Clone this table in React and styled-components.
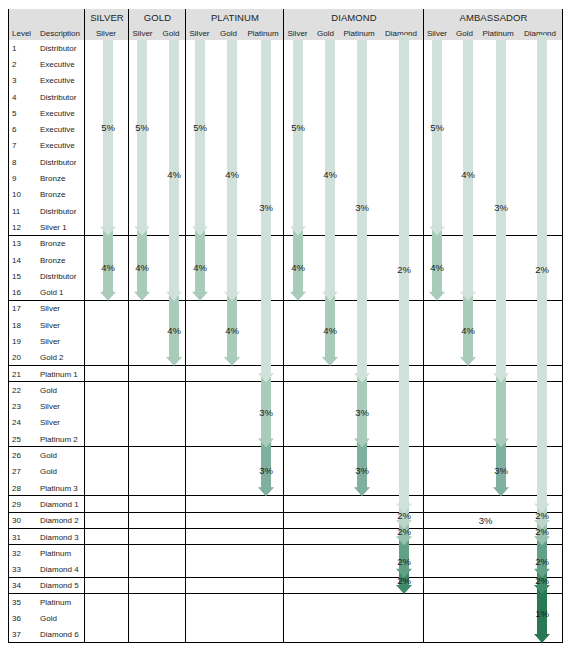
import React from 'react';
import styled, { createGlobalStyle } from 'styled-components';

const GlobalStyle = createGlobalStyle`
  html, body { margin: 0; padding: 0; background: #ffffff; }
  body { font-family: "Liberation Sans", Arial, sans-serif; color: #1c1c1c; }
`;

const Page = styled.div`
  padding: 9px 0 0 8px;
`;

const Grid = styled.div`
  display: grid;
  width: 554px;
  grid-template-columns: 27px 49px 44px 29px 28px 29px 29px 40px 29px 27px 40px 44px 28px 27px 40px 44px;
  grid-template-rows: 17px 14px repeat(37, 16.3px);
  border-left: 1px solid #000;
`;

const HeaderShade = styled.div`
  grid-column: 1 / -1;
  grid-row: 1 / 3;
  background: #dfdfdf;
  z-index: 0;
`;

const Frame = styled.div`
  grid-column: ${(p) => p.$cols};
  grid-row: 1 / -1;
  border-right: 1px solid #000;
  z-index: 1;
`;

const Band = styled.div`
  grid-column: 1 / -1;
  grid-row: ${(p) => p.$from + 2} / ${(p) => p.$to + 3};
  border-bottom: 1px solid #000;
  z-index: 1;
`;

const GroupTitle = styled.div`
  grid-column: ${(p) => p.$cols};
  grid-row: 1;
  display: flex;
  align-items: center;
  justify-content: center;
  font-size: 9.5px;
  letter-spacing: 0.1px;
  z-index: 2;
`;

const SubHead = styled.div`
  grid-column: ${(p) => p.$col};
  grid-row: 2;
  display: flex;
  align-items: center;
  justify-content: center;
  padding-right: 2px;
  font-size: 8px;
  white-space: nowrap;
  z-index: 2;
`;

const InfoHead = styled.div`
  grid-column: ${(p) => p.$col};
  grid-row: 2;
  display: flex;
  align-items: center;
  padding-left: ${(p) => p.$pad}px;
  font-size: 8px;
  z-index: 2;
`;

const Cell = styled.div`
  grid-column: ${(p) => p.$col};
  grid-row: ${(p) => p.$row + 2};
  display: flex;
  align-items: center;
  padding-left: ${(p) => p.$pad}px;
  font-size: 8px;
  white-space: nowrap;
  z-index: 2;
`;

const Segment = styled.div`
  grid-column: ${(p) => p.$col};
  grid-row: ${(p) => p.$from + 2} / ${(p) => p.$to + 3};
  justify-self: start;
  width: 16px;
  margin-left: ${(p) => p.$ml}px;
  margin-top: ${(p) => p.$mt}px;
  background: ${(p) => p.$color};
  clip-path: polygon(3px 0, 13px 0, 13px calc(100% - 9px), 16px calc(100% - 9px), 8px 100%, 0 calc(100% - 9px), 3px calc(100% - 9px));
  z-index: ${(p) => p.$z};
`;

const Pct = styled.div`
  grid-column: ${(p) => p.$col};
  grid-row: ${(p) => p.$from + 2} / ${(p) => p.$to + 3};
  justify-self: start;
  align-self: center;
  width: 16px;
  margin-left: ${(p) => p.$ml}px;
  display: flex;
  justify-content: center;
  font-size: 9.5px;
  line-height: 10px;
  white-space: nowrap;
  transform: translateY(${(p) => p.$dy}px);
  z-index: 30;
`;

const FreeNote = styled.div`
  grid-column: 14 / 16;
  grid-row: ${30 + 2};
  display: flex;
  align-items: center;
  justify-content: center;
  font-size: 9.5px;
  z-index: 30;
`;

const LIGHT = '#d0e0da';
const MED = '#a8cbba';
const DARK = '#7fb09f';
const D1 = '#bcd6ca';
const D2 = '#97c1ae';
const D3 = '#62a088';
const D4 = '#3f8a69';
const D5 = '#2a7853';

const silverLane = {
  segs: [
    { from: 1, to: 12, c: LIGHT },
    { from: 13, to: 16, c: MED },
  ],
  labels: [
    { t: '5%', from: 6, to: 6, dy: -2 },
    { t: '4%', from: 14, to: 15, dy: 0 },
  ],
};

const goldLane = {
  segs: [
    { from: 1, to: 16, c: LIGHT },
    { from: 17, to: 20, c: MED },
  ],
  labels: [
    { t: '4%', from: 9, to: 9, dy: -4 },
    { t: '4%', from: 18, to: 19, dy: -2 },
  ],
};

const platSegs = [
  { from: 1, to: 21, c: LIGHT },
  { from: 22, to: 25, c: MED },
  { from: 26, to: 28, c: DARK },
];

const platLane = {
  segs: platSegs,
  labels: [
    { t: '3%', from: 11, to: 11, dy: -3 },
    { t: '3%', from: 23, to: 24, dy: -2 },
    { t: '3%', from: 27, to: 27, dy: -1 },
  ],
};

const platLaneAmb = {
  segs: platSegs,
  labels: [
    { t: '3%', from: 11, to: 11, dy: -3 },
    { t: '3%', from: 27, to: 27, dy: -1 },
  ],
};

const diamondSegs = [
  { from: 1, to: 29, c: LIGHT, top: -5 },
  { from: 30, to: 30, c: D1 },
  { from: 31, to: 31, c: D2 },
  { from: 32, to: 33, c: D3 },
  { from: 34, to: 34, c: D4 },
];

const diamondLabels = [
  { t: '2%', from: 14, to: 15, dy: 2 },
  { t: '2%', from: 30, to: 30, dy: -5 },
  { t: '2%', from: 31, to: 31, dy: -5 },
  { t: '2%', from: 32, to: 33, dy: 0 },
  { t: '2%', from: 34, to: 34, dy: -5 },
];

const diamondLane = { segs: diamondSegs, labels: diamondLabels };

const diamondLaneAmb = {
  segs: [...diamondSegs, { from: 35, to: 37, c: D5 }],
  labels: [...diamondLabels, { t: '1%', from: 35, to: 37, dy: -5 }],
};

const lanes = [
  { col: 3, ml: 15, ...silverLane },
  { col: 4, ml: 5, ...silverLane },
  { col: 5, ml: 8, ...goldLane },
  { col: 6, ml: 6, ...silverLane },
  { col: 7, ml: 9, ...goldLane },
  { col: 8, ml: 14, ...platLane },
  { col: 9, ml: 6, ...silverLane },
  { col: 10, ml: 9, ...goldLane },
  { col: 11, ml: 14, ...platLane },
  { col: 12, ml: 16, ...diamondLane },
  { col: 13, ml: 5, ...silverLane },
  { col: 14, ml: 8, ...goldLane },
  { col: 15, ml: 14, ...platLaneAmb },
  { col: 16, ml: 15, ...diamondLaneAmb },
];

const groups = [
  { name: 'SILVER', cols: '3 / 4' },
  { name: 'GOLD', cols: '4 / 6' },
  { name: 'PLATINUM', cols: '6 / 9' },
  { name: 'DIAMOND', cols: '9 / 13' },
  { name: 'AMBASSADOR', cols: '13 / 17' },
];

const frames = ['1 / 3', '3 / 4', '4 / 6', '6 / 9', '9 / 13', '13 / 17'];

const subHeads = [
  'Silver',
  'Silver', 'Gold',
  'Silver', 'Gold', 'Platinum',
  'Silver', 'Gold', 'Platinum', 'Diamond',
  'Silver', 'Gold', 'Platinum', 'Diamond',
];

const descriptions = [
  'Distributor', 'Executive', 'Executive', 'Distributor', 'Executive', 'Executive',
  'Executive', 'Distributor', 'Bronze', 'Bronze', 'Distributor', 'Silver 1',
  'Bronze', 'Bronze', 'Distributor', 'Gold 1', 'Silver', 'Silver', 'Silver',
  'Gold 2', 'Platinum 1', 'Gold', 'Silver', 'Silver', 'Platinum 2', 'Gold',
  'Gold', 'Platinum 3', 'Diamond 1', 'Diamond 2', 'Diamond 3', 'Platinum',
  'Diamond 4', 'Diamond 5', 'Platinum', 'Gold', 'Diamond 6',
];

const groupEnds = [12, 16, 20, 21, 25, 28, 29, 30, 31, 33, 34, 37];

export default function App() {
  const bands = groupEnds.map((end, i) => ({ from: i === 0 ? 1 : groupEnds[i - 1] + 1, to: end }));
  return (
    <Page>
      <GlobalStyle />
      <Grid>
        <HeaderShade />
        {frames.map((c) => (
          <Frame key={c} $cols={c} />
        ))}
        {bands.map((b) => (
          <Band key={b.to} $from={b.from} $to={b.to} />
        ))}
        {groups.map((g) => (
          <GroupTitle key={g.name} $cols={g.cols}>
            {g.name}
          </GroupTitle>
        ))}
        <InfoHead $col={1} $pad={3}>Level</InfoHead>
        <InfoHead $col={2} $pad={4}>Description</InfoHead>
        {subHeads.map((s, i) => (
          <SubHead key={i} $col={i + 3}>
            {s}
          </SubHead>
        ))}
        {descriptions.map((d, i) => (
          <React.Fragment key={i}>
            <Cell $col={1} $row={i + 1} $pad={3}>
              {i + 1}
            </Cell>
            <Cell $col={2} $row={i + 1} $pad={4}>
              {d}
            </Cell>
          </React.Fragment>
        ))}
        {lanes.map((lane) => (
          <React.Fragment key={lane.col}>
            {lane.segs.map((s, i) => (
              <Segment
                key={i}
                $col={lane.col}
                $from={s.from}
                $to={s.to}
                $ml={lane.ml}
                $mt={s.top !== undefined ? s.top : i === 0 ? 0 : -9}
                $color={s.c}
                $z={20 - i}
              />
            ))}
            {lane.labels.map((l, i) => (
              <Pct key={i} $col={lane.col} $from={l.from} $to={l.to} $ml={lane.ml} $dy={l.dy}>
                {l.t}
              </Pct>
            ))}
          </React.Fragment>
        ))}
        <FreeNote>3%</FreeNote>
      </Grid>
    </Page>
  );
}
